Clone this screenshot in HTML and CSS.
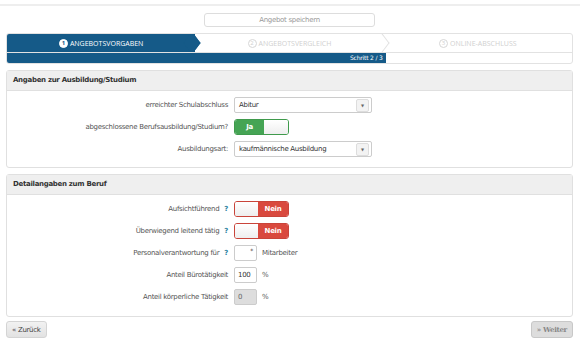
FILE: index.html
```html
<!DOCTYPE html>
<html lang="de">
<head>
    <meta charset="UTF-8">
    <title>Angebotsvorgaben</title>
    <link rel="stylesheet" href="styles.css">
</head>
<body>
    <div class="topline"></div>
    <div class="page">
        <div class="save-row">
            <button class="save-btn">Angebot speichern</button>
        </div>

        <div class="stepper">
            <div class="steps">
                <div class="step active"><span class="num">1</span>ANGEBOTSVORGABEN</div>
                <div class="step"><span class="num">2</span>ANGEBOTSVERGLEICH</div>
                <div class="step last"><span class="num">3</span>ONLINE-ABSCHLUSS</div>
            </div>
            <div class="progress">
                <div class="progress-bar">Schritt 2 / 3</div>
            </div>
        </div>

        <div class="panel">
            <div class="panel-head">Angaben zur Ausbildung/Studium</div>
            <div class="panel-body">
                <div class="row">
                    <label>erreichter Schulabschluss</label>
                    <div class="select"><span>Abitur</span><span class="arrow">▼</span></div>
                </div>
                <div class="row">
                    <label>abgeschlossene Berufsausbildung/Studium?</label>
                    <div class="toggle yes"><span class="on">Ja</span><span class="knob"></span></div>
                </div>
                <div class="row">
                    <label>Ausbildungsart:</label>
                    <div class="select"><span>kaufmännische Ausbildung</span><span class="arrow">▼</span></div>
                </div>
            </div>
        </div>

        <div class="panel second">
            <div class="panel-head">Detailangaben zum Beruf</div>
            <div class="panel-body tall">
                <div class="row">
                    <label>Aufsichtführend <b class="help">?</b></label>
                    <div class="toggle no"><span class="knob"></span><span class="off">Nein</span></div>
                </div>
                <div class="row">
                    <label>Überwiegend leitend tätig <b class="help">?</b></label>
                    <div class="toggle no"><span class="knob"></span><span class="off">Nein</span></div>
                </div>
                <div class="row">
                    <label>Personalverantwortung für <b class="help">?</b></label>
                    <div class="num-input"><span class="req">*</span></div>
                    <span class="unit">Mitarbeiter</span>
                </div>
                <div class="row">
                    <label>Anteil Bürotätigkeit</label>
                    <div class="num-input">100</div>
                    <span class="unit">%</span>
                </div>
                <div class="row">
                    <label>Anteil körperliche Tätigkeit</label>
                    <div class="num-input disabled">0</div>
                    <span class="unit">%</span>
                </div>
            </div>
        </div>

        <div class="nav">
            <button class="nav-btn">« Zurück</button>
            <button class="nav-btn off">» Weiter</button>
        </div>
    </div>
</body>
</html>
```

FILE: styles.css
```css
body {
    margin: 0;
    background: #fff;
    font-family: "DejaVu Sans", Verdana, sans-serif;
    font-size: 7px;
    letter-spacing: -0.3px;
    color: #555;
}

.topline {
    height: 2px;
    margin-top: 4px;
    background: #eee;
}

.page {
    padding: 0 7px 0 6px;
}

.save-row {
    display: flex;
    justify-content: center;
    padding-top: 7px;
}

.save-btn {
    width: 171px;
    height: 14px;
    padding: 0;
    background: #fff;
    border: 1px solid #ddd;
    border-radius: 3px;
    font-family: "DejaVu Sans", sans-serif;
    font-size: 7px;
    letter-spacing: -0.3px;
    color: #999;
}

/* stepper */
.stepper {
    margin-top: 6px;
    border: 1px solid #e2e2e2;
    border-radius: 3px;
    overflow: hidden;
}

.steps {
    display: flex;
    height: 18px;
}

.step {
    flex: 1;
    display: flex;
    align-items: center;
    justify-content: center;
    gap: 2px;
    font-family: "Open Sans", sans-serif;
    font-size: 7px;
    letter-spacing: 0;
    color: #d0d0d0;
    position: relative;
}

.step:not(.last)::after {
    content: "";
    position: absolute;
    right: -4px;
    top: -1px;
    width: 13px;
    height: 13px;
    border-top: 1px solid #e2e2e2;
    border-right: 1px solid #e2e2e2;
    transform: translateY(3px) rotate(45deg) skew(8deg, 8deg);
    background: #fff;
    z-index: 1;
}

.step.active {
    background: #155a88;
    color: #fff;
}

.step.active::after {
    background: #155a88;
    border-color: #155a88;
}

.num {
    display: inline-flex;
    align-items: center;
    justify-content: center;
    width: 9px;
    height: 9px;
    border-radius: 50%;
    border: 1px solid #d6d6d6;
    font-size: 6px;
    box-sizing: border-box;
}

.active .num {
    background: #fff;
    color: #155a88;
    border-color: #fff;
    font-weight: bold;
}

.progress {
    height: 10px;
    border-top: 1px solid #e2e2e2;
    position: relative;
    z-index: 2;
}

.progress-bar {
    width: 67%;
    height: 100%;
    background: #155a88;
    color: #fff;
    font-size: 6px;
    letter-spacing: -0.2px;
    text-align: right;
    padding-right: 3px;
    box-sizing: border-box;
    line-height: 10px;
}

/* panels */
.panel {
    margin-top: 6px;
    border: 1px solid #e0e0e0;
    border-radius: 3px;
}

.panel.second {
    margin-top: 6px;
}

.panel-head {
    height: 19px;
    line-height: 19px;
    padding-left: 6px;
    background: #efefef;
    border-bottom: 1px solid #e0e0e0;
    font-weight: bold;
    color: #333;
}

.panel-body {
    display: flex;
    flex-direction: column;
    gap: 6px;
    padding: 6px 0 10px;
}

.panel-body.tall {
    padding: 6px 0 11px;
}

.row {
    display: flex;
    align-items: center;
    height: 16px;
}

.row label {
    width: 227px;
    padding-right: 6px;
    text-align: right;
    box-sizing: border-box;
}

.help {
    color: #2b7fa0;
    margin-left: 3px;
}

.select {
    width: 138px;
    height: 16px;
    border: 1px solid #ccc;
    border-radius: 2px;
    display: flex;
    align-items: center;
    justify-content: space-between;
    padding-left: 4px;
    box-sizing: border-box;
    color: #333;
}

.arrow {
    width: 11px;
    height: 11px;
    margin-right: 2px;
    border: 1px solid #ddd;
    border-radius: 2px;
    background: #f3f3f3;
    font-size: 4px;
    color: #666;
    display: flex;
    align-items: center;
    justify-content: center;
}

.toggle {
    width: 55px;
    height: 16px;
    border-radius: 3px;
    display: flex;
    box-sizing: border-box;
    overflow: hidden;
    font-weight: bold;
    color: #fff;
}

.toggle.yes {
    border: 1px solid #3f9a4c;
}

.toggle.no {
    border: 1px solid #c9443a;
}

.toggle .on {
    width: 29px;
    background: #45a454;
    display: flex;
    align-items: center;
    justify-content: center;
}

.toggle .off {
    flex: 1;
    background: #d9493e;
    display: flex;
    align-items: center;
    justify-content: center;
}

.toggle .knob {
    flex: 1;
    background: linear-gradient(#fff, #eee);
}

.toggle.no .knob {
    flex: none;
    width: 23px;
}

.num-input {
    width: 23px;
    height: 16px;
    border: 1px solid #ccc;
    border-radius: 2px;
    box-sizing: border-box;
    padding-left: 3px;
    display: flex;
    align-items: center;
    color: #333;
    position: relative;
}

.num-input.disabled {
    background: #ddd;
    color: #666;
}

.req {
    position: absolute;
    right: 3px;
    top: 1px;
    font-size: 6px;
}

.unit {
    margin-left: 5px;
}

/* nav */
.nav {
    display: flex;
    justify-content: space-between;
    margin-top: 4px;
}

.nav-btn {
    height: 17px;
    padding: 0 5px;
    background: linear-gradient(#f2f2f2, #e2e2e2);
    border: 1px solid #d4d4d4;
    border-radius: 3px;
    font-family: "DejaVu Sans", sans-serif;
    font-size: 7px;
    letter-spacing: -0.3px;
    color: #444;
}

.nav-btn.off {
    background: #ddd;
    border-color: #c8c8c8;
    color: #888;
    font-family: "DejaVu Serif", serif;
    font-weight: bold;
}
```
